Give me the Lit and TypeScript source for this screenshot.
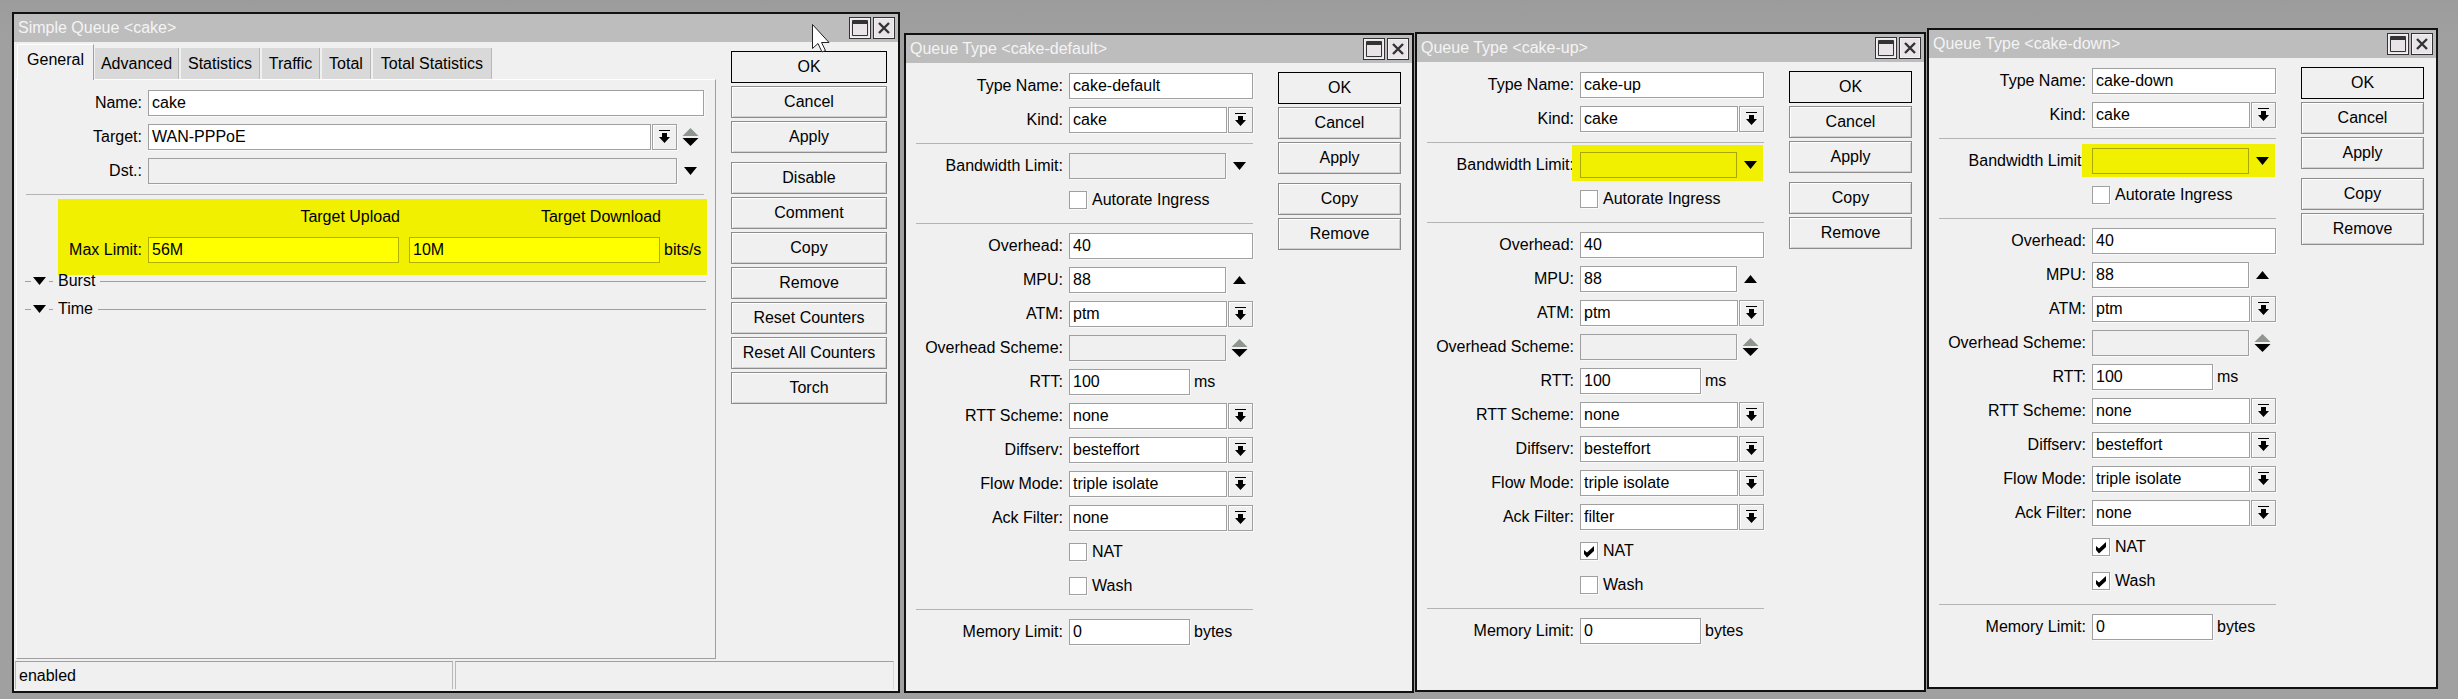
import { LitElement, html, css, nothing } from "lit";
import { customElement } from "lit/decorators.js";

const down = html`<svg class="ic" width="15" height="9" viewBox="0 0 15 9"><path d="M1 0h13L7.5 8z" fill="#000"/></svg>`;
const up = html`<svg class="ic" width="15" height="9" viewBox="0 0 15 9"><path d="M1 8h13L7.5 0z" fill="#000"/></svg>`;
const updown = html`<svg class="ic" width="17" height="20" viewBox="0 0 17 20"><path d="M.5 9h16L8.5 1z" fill="#8f968f"/><path d="M.5 11h16L8.5 19z" fill="#000"/></svg>`;
const sel = html`<span class="dbtn"><svg width="13" height="14" viewBox="0 0 13 14"><path d="M1 0h11v1H1zM4 3h5v4h3l-5.5 6L1 7h3z" fill="#000"/></svg></span>`;
const check = html`<svg width="16" height="16" viewBox="0 0 16 16"><path d="M3 7l3 2.5L13 3v5l-7 6.5L3 11z" fill="#000"/></svg>`;

function wbtns() {
  return html`<span class="wbtns">
    <span class="wb"><svg width="18" height="18" viewBox="0 0 18 18"><path d="M2 2h14v14H2z" fill="#e8e4e8"/><path d="M1.5 1.5h15v15h-15z" fill="none" stroke="#333" stroke-width="1"/><path d="M2 2h14v3H2z" fill="#333"/></svg></span>
    <span class="wb"><svg width="14" height="14" viewBox="0 0 14 14"><path d="M2 2l10 10M12 2L2 12" stroke="#333" stroke-width="2.4" fill="none"/></svg></span>
  </span>`;
}

interface Cfg {
  title: string; left: number; top: number; w: number; h: number;
  name: string; ack: string; nat: boolean; wash: boolean;
  hl?: [number, number, number];
}

const LABEL_W = 147;
const INPUT_W = 184;
const SHORT_W = 121;
const BTN_W = 123;

const CFG: Cfg[] = [
  { title: "Queue Type <cake-default>", left: 904, top: 33, w: 510, h: 660, name: "cake-default", ack: "none", nat: false, wash: false },
  { title: "Queue Type <cake-up>", left: 1415, top: 32, w: 511, h: 660, name: "cake-up", ack: "filter", nat: true, wash: false, hl: [8, 7, 3] },
  { title: "Queue Type <cake-down>", left: 1927, top: 28, w: 511, h: 661, name: "cake-down", ack: "none", nat: true, wash: true, hl: [10, 4, 3] },
];

@customElement("app-root")
export class AppRoot extends LitElement {
  static styles = css`
    :host { display: block; position: relative; width: 2458px; height: 699px; overflow: hidden; background: linear-gradient(#9c9c9c, #a0a0a0 40px); font: 16px/18px "Liberation Sans", Arial, sans-serif; color: #000; }
    .win { position: absolute; box-sizing: border-box; border: 2px solid #111; background: #f0f0f0; display: flex; flex-direction: column; }
    .title { height: 28px; flex: none; background: #bdbdbd; color: #f4f4f4; display: flex; align-items: center; padding-left: 4px; justify-content: space-between; white-space: pre; }
    .wbtns { display: flex; gap: 2px; margin-right: 3px; }
    .wb { width: 22px; height: 22px; box-sizing: border-box; border: 1px solid #333; background: #e8e4e8; box-shadow: inset 0 0 0 1px #f4f0f4; display: flex; align-items: center; justify-content: center; }
    .body { flex: 1; display: flex; min-height: 0; }
    .form { padding: 10px 0 0 10px; flex: none; margin-right: 25px; }
    .row { display: flex; align-items: center; height: 26px; margin-bottom: 8px; }
    .lbl { flex: none; text-align: right; white-space: nowrap; margin-right: 6px; }
    .fld { display: flex; align-items: center; flex: none; height: 26px; }
    .inp { box-sizing: border-box; height: 26px; border: 1px solid #a0a0a0; background: #fff; box-shadow: 1px 1px 0 #fafafa; padding: 0 3px; line-height: 24px; white-space: nowrap; overflow: hidden; flex: none; }
    .inp.gray { background: #f0f0f0; }
    .inp.grow { flex: 1; min-width: 0; }
    .hlbox { background: #f0f000; display: flex; align-items: center; box-sizing: border-box; }
    .hlbox .inp { background: #f0f000; border-color: #a8a800; box-shadow: none; }
    .dbtn { box-sizing: border-box; flex: none; width: 25px; height: 26px; margin-left: 1px; border: 1px solid #a0a0a0; box-shadow: 1px 1px 0 #fafafa, inset 1px 1px 0 #fff; background: #f0f0f0; display: flex; align-items: center; justify-content: center; }
    .icell { flex: 1; display: flex; align-items: center; justify-content: center; }
    .ic { display: block; }
    .unit { margin-left: 4px; white-space: nowrap; }
    .cb { box-sizing: border-box; width: 18px; height: 18px; border: 1px solid #a0a0a0; background: #fff; box-shadow: 1px 1px 0 #fafafa; flex: none; margin-right: 5px; display: flex; align-items: center; justify-content: center; }
    .sep { height: 1px; background: #b4b4b4; margin: 10px 0 9px; }
    .sep.tight { width: 678px; margin-bottom: 4px; }
    .btns { flex: none; display: flex; flex-direction: column; gap: 3px; padding-top: 9px; }
    .btn { box-sizing: border-box; height: 32px; border: 1px solid #8c8c8c; background: #f0f0f0; box-shadow: inset 1px 1px 0 #fff, inset -1px -1px 0 #d0d0d0; display: flex; align-items: center; justify-content: center; white-space: nowrap; }
    .btn.def { border-color: #000; box-shadow: none; }
    .btn.sp { margin-top: 6px; }
    .left { flex: none; width: 702px; display: flex; flex-direction: column; }
    .tabs { display: flex; align-items: flex-start; gap: 2px; margin: 2px 0 -1px 3px; position: relative; z-index: 1; height: 36px; flex: none; }
    .tab { height: 31px; margin-top: 4px; background: #d9d9d9; display: flex; align-items: center; justify-content: center; box-sizing: border-box; border-right: 1px solid #b8b8b8; }
    .tab.on { height: 36px; margin-top: 0; background: #f0f0f0; border-left: 1px solid #fff; border-top: 1px solid #fff; border-right: 1px solid #a0a0a0; padding-bottom: 6px; margin-right: -1px; }
    .panel { flex: 1; margin-left: 2px; box-sizing: border-box; border: 1px solid #a0a0a0; border-left-color: #fff; border-top-color: #fff; padding: 10px 0 0 9px; }
    .yellow { background: #f0f000; margin: 0 0 0 32px; width: 649px; height: 76px; display: flex; flex-direction: column; box-sizing: border-box; }
    .yhead { height: 38px; padding-bottom: 2px; box-sizing: border-box; display: flex; align-items: center; }
    .yhead span { white-space: nowrap; text-align: right; flex: none; }
    .yrow { display: flex; align-items: center; height: 26px; }
    .yrow .inp { background: #ff0; border-color: #b0b000; box-shadow: none; }
    .sect { display: flex; align-items: center; width: 681px; height: 12px; line-height: 12px; margin-left: -1px; }
    .sect .dash { width: 6px; height: 1px; background: #a0a0a0; flex: none; margin-right: 1px; }
    .sect .dash2 { width: 4px; height: 1px; background: #a0a0a0; flex: none; margin: 0 5px 0 2px; }
    .sect .line { flex: 1; height: 1px; background: #a0a0a0; margin-left: 5px; }
    .sect.time { margin-top: 16px; }
    .status { flex: none; display: flex; gap: 2px; height: 28px; margin: 2px 4px 2px 1px; }
    .scell { box-sizing: border-box; border-top: 1px solid #a0a0a0; background: #f0f0f0; padding-left: 3px; display: flex; align-items: center; }
    .scell.a { width: 438px; border-left: 1px solid #b8b8b8; border-right: 1px solid #b8b8b8; }
    .scell.b { flex: 1; border-left: 1px solid #b8b8b8; border-right: 1px solid #d8d8d8; }
    .cursor { position: absolute; left: 812px; top: 24px; }
  `;

  private row(label: string, labelW: number, content: unknown) {
    return html`<div class="row"><span class="lbl" style="width:${labelW}px">${label}</span>${content}</div>`;
  }

  private fld(w: number, content: unknown) {
    return html`<span class="fld" style="width:${w}px">${content}</span>`;
  }

  private text(v: string, w: number) {
    return this.fld(w, html`<span class="inp" style="width:${w}px">${v}</span>`);
  }

  private select(v: string, w: number) {
    return this.fld(w, html`<span class="inp grow">${v}</span>${sel}`);
  }

  private iconField(v: string, w: number, gray: boolean, icon: unknown) {
    return this.fld(w, html`<span class="inp ${gray ? "gray" : ""}" style="width:${w - 27}px">${v}</span><span class="icell">${icon}</span>`);
  }

  private cbRow(label: string, labelW: number, on: boolean) {
    return html`<div class="row"><span class="lbl" style="width:${labelW}px"></span><span class="cb">${on ? check : nothing}</span>${label}</div>`;
  }

  private short(v: string, unit: string, w: number) {
    return html`<span class="inp" style="width:${w}px">${v}</span><span class="unit">${unit}</span>`;
  }

  private queueType(c: Cfg) {
    const L = LABEL_W;
    const W = INPUT_W;
    const bw = c.hl
      ? html`<div class="hlbox" style="width:${W + c.hl[0] - 1}px;padding:${c.hl[1]}px 0 ${c.hl[2]}px ${c.hl[0]}px;margin:${c.hl[2] - c.hl[1]}px 0 0 ${-c.hl[0]}px;height:${26 + c.hl[1] + c.hl[2]}px">${this.fld(W, html`<span class="inp" style="width:${W - 27}px"></span><span class="icell">${down}</span>`)}</div>`
      : this.iconField("", W, true, down);
    return html`<div class="win" style="left:${c.left}px;top:${c.top}px;width:${c.w}px;height:${c.h}px">
      <div class="title"><span>${c.title}</span>${wbtns()}</div>
      <div class="body">
        <div class="form">
          ${this.row("Type Name:", L, this.text(c.name, W))}
          ${this.row("Kind:", L, this.select("cake", W))}
          <div class="sep"></div>
          ${this.row("Bandwidth Limit:", L, bw)}
          ${this.cbRow("Autorate Ingress", L, false)}
          <div class="sep"></div>
          ${this.row("Overhead:", L, this.text("40", W))}
          ${this.row("MPU:", L, this.iconField("88", W, false, up))}
          ${this.row("ATM:", L, this.select("ptm", W))}
          ${this.row("Overhead Scheme:", L, this.iconField("", W, true, updown))}
          ${this.row("RTT:", L, this.short("100", "ms", SHORT_W))}
          ${this.row("RTT Scheme:", L, this.select("none", W))}
          ${this.row("Diffserv:", L, this.select("besteffort", W))}
          ${this.row("Flow Mode:", L, this.select("triple isolate", W))}
          ${this.row("Ack Filter:", L, this.select(c.ack, W))}
          ${this.cbRow("NAT", L, c.nat)}
          ${this.cbRow("Wash", L, c.wash)}
          <div class="sep"></div>
          ${this.row("Memory Limit:", L, this.short("0", "bytes", SHORT_W))}
        </div>
        <div class="btns" style="width:${BTN_W}px">
          <div class="btn def">OK</div>
          <div class="btn">Cancel</div>
          <div class="btn">Apply</div>
          <div class="btn sp">Copy</div>
          <div class="btn">Remove</div>
        </div>
      </div>
    </div>`;
  }

  private simpleQueue() {
    const L = 116;
    const tabs: [string, number][] = [["Advanced", 84], ["Statistics", 79], ["Traffic", 58], ["Total", 49], ["Total Statistics", 119]];
    return html`<div class="win" style="left:12px;top:12px;width:888px;height:681px">
      <div class="title"><span>Simple Queue &lt;cake&gt;</span>${wbtns()}</div>
      <div class="body">
        <div class="left">
          <div class="tabs">
            <div class="tab on" style="width:77px">General</div>
            ${tabs.map(([t, w]) => html`<div class="tab" style="width:${w}px">${t}</div>`)}
          </div>
          <div class="panel">
            ${this.row("Name:", L, this.text("cake", 556))}
            ${this.row("Target:", L, this.fld(556, html`<span class="fld" style="width:529px"><span class="inp grow">WAN-PPPoE</span>${sel}</span><span class="icell">${updown}</span>`))}
            ${this.row("Dst.:", L, this.iconField("", 556, true, down))}
            <div class="sep tight"></div>
            <div class="yellow">
              <div class="yhead"><span style="width:342px">Target Upload</span><span style="width:261px">Target Download</span></div>
              <div class="yrow">
                <span class="lbl" style="width:84px">Max Limit:</span>
                <span class="inp" style="width:251px">56M</span>
                <span class="inp" style="width:251px;margin-left:10px">10M</span>
                <span class="unit">bits/s</span>
              </div>
            </div>
            <div class="sect"><span class="dash"></span>${down}<span class="dash2"></span>Burst<span class="line"></span></div>
            <div class="sect time"><span class="dash"></span>${down}<span class="dash2"></span>Time<span class="line"></span></div>
          </div>
        </div>
        <div class="btns" style="width:156px;margin-left:15px">
          <div class="btn def">OK</div>
          <div class="btn">Cancel</div>
          <div class="btn">Apply</div>
          <div class="btn sp">Disable</div>
          <div class="btn">Comment</div>
          <div class="btn">Copy</div>
          <div class="btn">Remove</div>
          <div class="btn">Reset Counters</div>
          <div class="btn">Reset All Counters</div>
          <div class="btn">Torch</div>
        </div>
      </div>
      <div class="status"><div class="scell a">enabled</div><div class="scell b"></div></div>
    </div>`;
  }

  render() {
    return html`
      ${this.simpleQueue()}
      ${CFG.map((c) => this.queueType(c))}
      <svg class="cursor" width="20" height="30" viewBox="0 0 20 30"><path d="M.5.5v24l5.5-5 4 8.5 3.5-1.5-4-8H17z" fill="#fff" stroke="#222" stroke-width="1"/></svg>
    `;
  }
}
